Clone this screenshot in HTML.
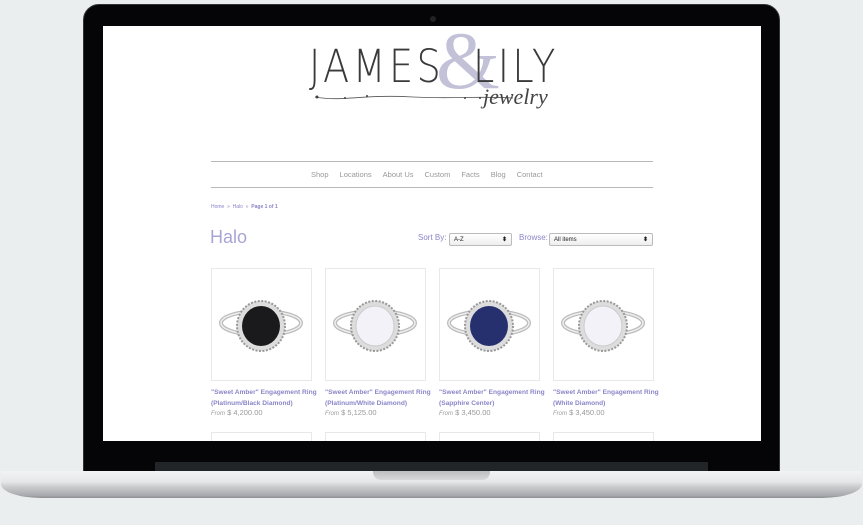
<!DOCTYPE html>
<html><head><meta charset="utf-8"><style>
*{margin:0;padding:0;box-sizing:border-box}
body{width:863px;height:525px;background:#eaeeef;position:relative;overflow:hidden;font-family:"Liberation Sans",sans-serif}
.bezel{position:absolute;left:83px;top:4px;width:697px;height:470px;background:#050507;border-radius:16px 16px 0 0;border:1px solid #333}
.cam{position:absolute;left:346px;top:11px;width:6px;height:6px;border-radius:50%;background:#222}
.screen{position:absolute;left:103px;top:26px;width:658px;height:415px;background:#fff;overflow:hidden}
.base{position:absolute;left:1px;top:471px;width:861px;height:27px;background:linear-gradient(#f2f3f4 0,#e6e7e8 40%,#c9cacc 60%,#a9aaad 90%,#8e8f92 100%);border-radius:0 0 40px 40px/0 0 14px 14px}
.lip{position:absolute;left:155px;top:462px;width:553px;height:10px;background:#222528}
.notch{position:absolute;left:373px;top:471px;width:117px;height:9px;background:linear-gradient(#bdbec0,#d8d9da);border-radius:0 0 8px 8px}
.s{position:absolute;white-space:nowrap}
.line{position:absolute;left:108px;width:442px;height:1px;background:#b8b8b8}
.nav{font-size:7.5px;color:#999;top:144px;left:208px}
.nav span{margin-right:11px}
.card{position:absolute;width:101px;height:113px;border:1px solid #e8e8e8;top:242px}
.t{font-size:6.6px;color:#8a86c8;line-height:11px;top:361px;font-weight:bold}
.p{font-size:7.5px;color:#999;top:382px}
.sel{position:absolute;height:13px;border:1px solid #bbb;border-radius:2px;background:linear-gradient(#fff,#eee);font-size:6px;color:#222;padding:3px 4px;top:207px}
.sel b{position:absolute;right:4px;top:2px;font-size:6px}
</style></head><body>
<div class="bezel"><div class="cam"></div></div>
<div class="lip"></div>
<div class="base"></div>
<div class="notch"></div>
<div class="screen">
 <div class="s" style="left:206px;top:14px;font-size:45px;color:#3a3a3a;letter-spacing:4px;font-family:'DejaVu Sans',sans-serif;transform:scaleX(0.85);transform-origin:left;font-weight:200">JAMES</div>
 <div class="s" style="left:333px;top:-12px;font-size:82px;color:#c2c1d8;font-family:'Liberation Serif',serif">&amp;</div>
 <div class="s" style="left:370px;top:14px;font-size:45px;color:#3a3a3a;letter-spacing:4px;font-family:'DejaVu Sans',sans-serif;transform:scaleX(0.85);transform-origin:left;font-weight:200">LILY</div>
 <svg style="position:absolute;left:200px;top:60px" width="260" height="60"><path d="M12 11 C40 16,60 8,110 11 C150 13,170 10,210 12" stroke="#555" fill="none" stroke-width="0.8"/><circle cx="14" cy="11" r="1.5" fill="#444"/><circle cx="42" cy="12" r="1" fill="#444"/><circle cx="64" cy="10" r="1" fill="#444"/><circle cx="162" cy="12" r="1" fill="#444"/><circle cx="177" cy="12" r="1" fill="#444"/></svg>
 <div class="s" style="left:380px;top:58px;font-size:22px;font-style:italic;color:#444;font-family:'Liberation Serif',serif">jewelry</div>
 <div class="line" style="top:135px"></div>
 <div class="line" style="top:161px"></div>
 <div class="s nav"><span>Shop</span><span>Locations</span><span>About Us</span><span>Custom</span><span>Facts</span><span>Blog</span><span>Contact</span></div>
 <div class="s" style="left:108px;top:178px;font-size:5px;color:#8a86c8">Home &nbsp;»&nbsp; Halo &nbsp;»&nbsp; <b>Page 1 of 1</b></div>
 <div class="s" style="left:107px;top:201px;font-size:18px;color:#a7a4d6">Halo</div>
 <div class="s" style="left:315px;top:207px;font-size:8px;color:#8a86c8">Sort By:</div>
 <div class="sel" style="left:346px;width:63px">A-Z<b>⬍</b></div>
 <div class="s" style="left:416px;top:207px;font-size:8px;color:#8a86c8">Browse:</div>
 <div class="sel" style="left:446px;width:104px">All items<b>⬍</b></div>

 <div class="card" style="left:108px"></div>
 <div class="card" style="left:222px"></div>
 <div class="card" style="left:336px"></div>
 <div class="card" style="left:450px"></div>
 <svg style="position:absolute;left:108px;top:242px" width="450" height="113">
  <defs><g id="r"><ellipse cx="50" cy="55" rx="40" ry="12" fill="none" stroke="#bbb" stroke-width="4"/><ellipse cx="50" cy="55" rx="40" ry="12" fill="none" stroke="#eee" stroke-width="1.5"/><ellipse cx="50" cy="58" rx="24" ry="25" fill="#ddd" stroke="#999" stroke-width="2" stroke-dasharray="2 1.5"/></g></defs>
  <use href="#r" x="0"/><ellipse cx="50" cy="58" rx="19" ry="20" fill="#1a1a1c"/>
  <use href="#r" x="114"/><ellipse cx="164" cy="58" rx="19" ry="20" fill="#f2f2f8" stroke="#ccc"/>
  <use href="#r" x="228"/><ellipse cx="278" cy="58" rx="19" ry="20" fill="#27306e"/>
  <use href="#r" x="342"/><ellipse cx="392" cy="58" rx="19" ry="20" fill="#f2f2f8" stroke="#ccc"/>
 </svg>
 <div class="s t" style="left:108px">"Sweet Amber" Engagement Ring<br>(Platinum/Black Diamond)</div>
 <div class="s t" style="left:222px">"Sweet Amber" Engagement Ring<br>(Platinum/White Diamond)</div>
 <div class="s t" style="left:336px">"Sweet Amber" Engagement Ring<br>(Sapphire Center)</div>
 <div class="s t" style="left:450px">"Sweet Amber" Engagement Ring<br>(White Diamond)</div>
 <div class="s p" style="left:108px"><i style="font-size:6px">From</i> $ 4,200.00</div>
 <div class="s p" style="left:222px"><i style="font-size:6px">From</i> $ 5,125.00</div>
 <div class="s p" style="left:336px"><i style="font-size:6px">From</i> $ 3,450.00</div>
 <div class="s p" style="left:450px"><i style="font-size:6px">From</i> $ 3,450.00</div>
 <div class="card" style="left:108px;top:406px"></div>
 <div class="card" style="left:222px;top:406px"></div>
 <div class="card" style="left:336px;top:406px"></div>
 <div class="card" style="left:450px;top:406px"></div>
</div>
</body></html>
